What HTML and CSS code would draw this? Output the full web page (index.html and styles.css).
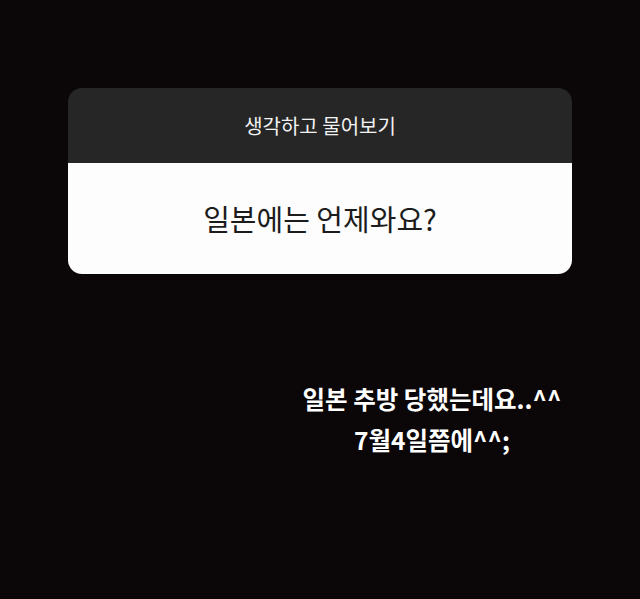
FILE: index.html
```html
<!DOCTYPE html>
<html>

<head>
    <meta charset="UTF-8">
    <meta name="viewport" content="width=device-width, initial-scale=1.0">
    <link rel="stylesheet" href="styles.css">
</head>

<body>
    <div class="story">
        <div class="question-card">
            <div class="card-header">생각하고 물어보기</div>
            <div class="card-body">일본에는 언제와요?</div>
        </div>
        <div class="answer">
            <p>일본 추방 당했는데요..^^</p>
            <p>7월4일쯤에^^;</p>
        </div>
    </div>
</body>

</html>
```

FILE: styles.css
```css
body {
    margin: 0;
    padding: 0;
    background-color: #0b0607;
    font-family: "Noto Sans CJK KR", "Noto Sans", sans-serif;
}

.story {
    width: 640px;
    height: 599px;
    padding-top: 88px;
    box-sizing: border-box;
}

.question-card {
    width: 504px;
    margin-left: 68px;
    border-radius: 14px;
    overflow: hidden;
}

.card-header {
    height: 75px;
    background-color: #262626;
    color: #f2f2f2;
    font-size: 20px;
    display: flex;
    align-items: center;
    justify-content: center;
}

.card-body {
    height: 111px;
    background-color: #fdfdfd;
    color: #1c1c1c;
    font-size: 29px;
    display: flex;
    align-items: center;
    justify-content: center;
    padding-bottom: 2px;
    box-sizing: border-box;
}

.answer {
    margin-top: 104px;
    margin-left: 282px;
    width: 300px;
    text-align: center;
    color: #ffffff;
    font-size: 24.5px;
    font-weight: bold;
    line-height: 41px;
}

.answer p {
    margin: 0;
}
```
